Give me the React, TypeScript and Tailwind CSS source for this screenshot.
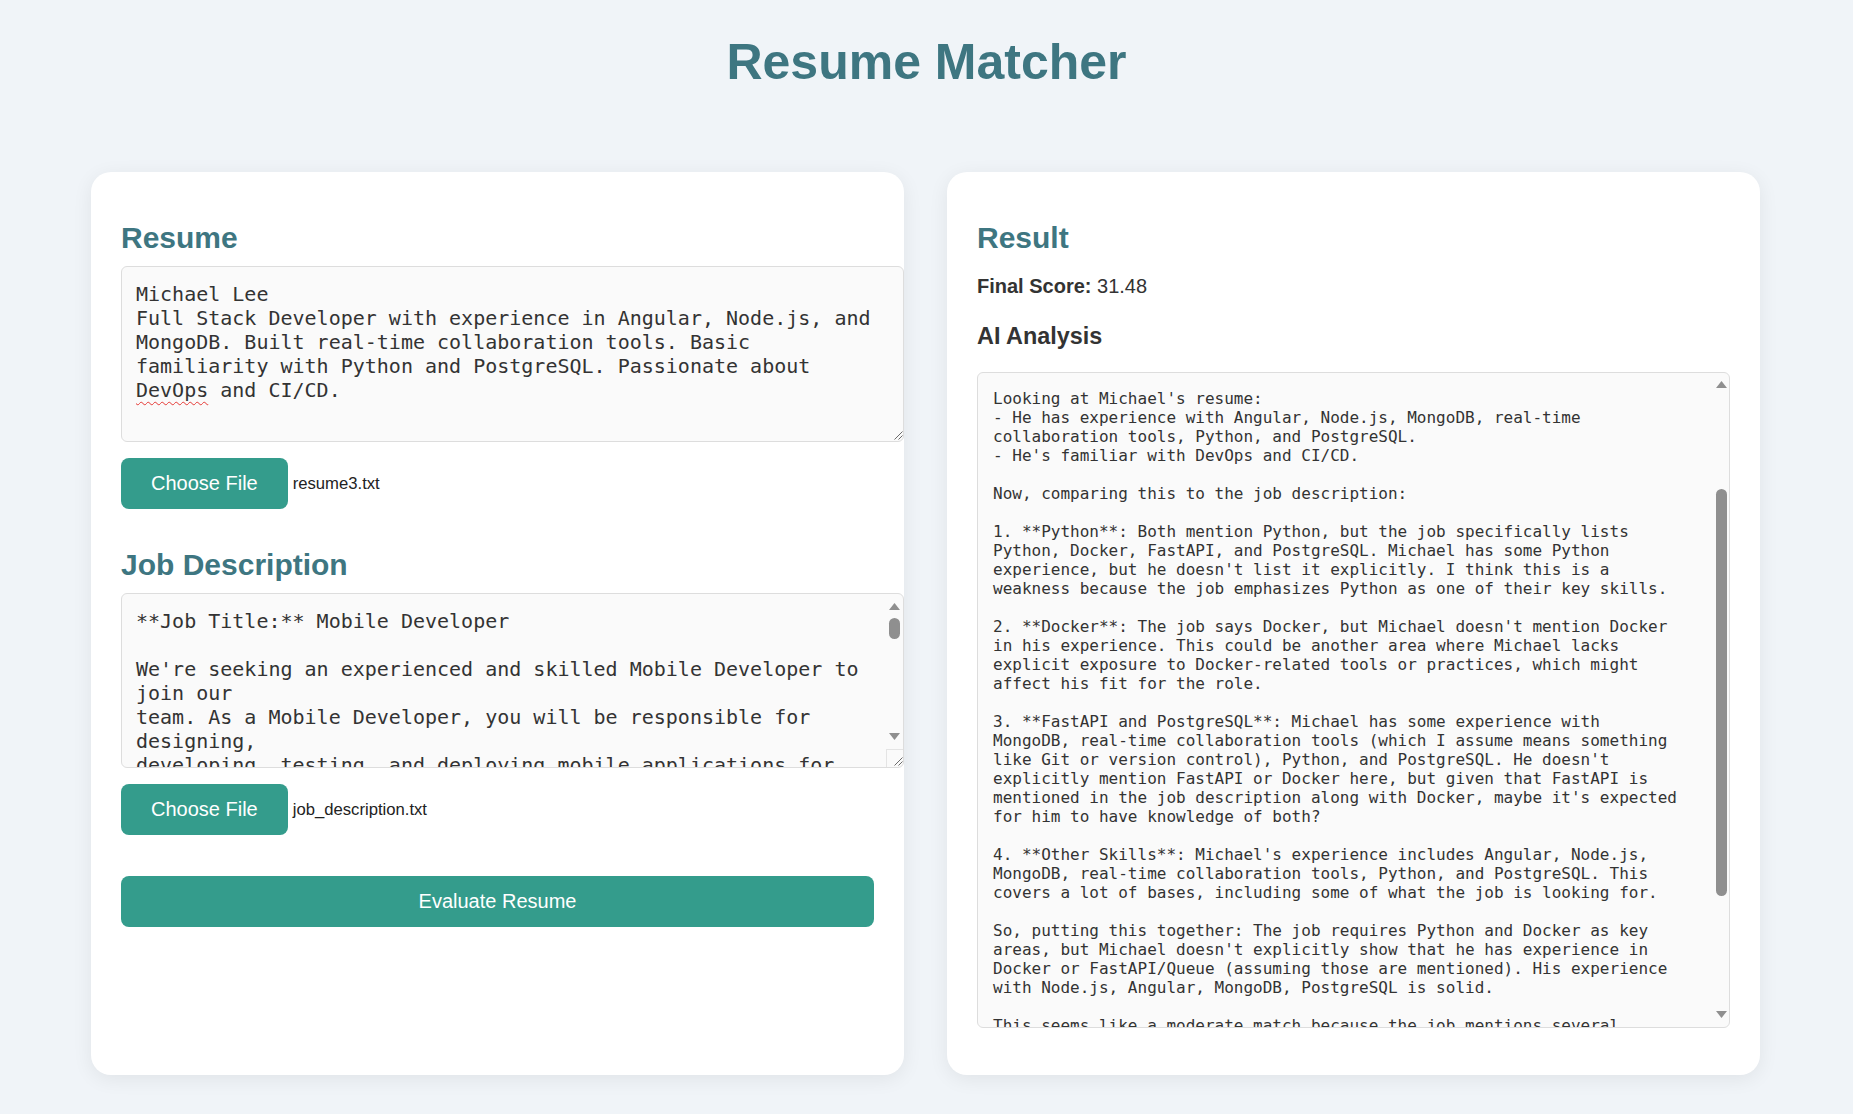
import React from "react";

const sans = "font-['Liberation_Sans',Arial,sans-serif]";
const mono = "font-['DejaVu_Sans_Mono',monospace]";

function UpArrow() {
  return (
    <svg width="11" height="7" viewBox="0 0 11 7" className="block">
      <path d="M0 7 L5.5 0 L11 7 Z" fill="#8f8f8f" />
    </svg>
  );
}

function DownArrow() {
  return (
    <svg width="11" height="7" viewBox="0 0 11 7" className="block">
      <path d="M0 0 L11 0 L5.5 7 Z" fill="#8f8f8f" />
    </svg>
  );
}

function Grip() {
  return (
    <svg width="9" height="9" viewBox="0 0 9 9" className="block">
      <path d="M8.5 0.5 L0.5 8.5 M8.5 4.5 L4.5 8.5" stroke="#6b6b6b" strokeWidth="1" />
    </svg>
  );
}

const resumeLines: React.ReactNode[] = [
  "Michael Lee",
  "Full Stack Developer with experience in Angular, Node.js, and",
  "MongoDB. Built real-time collaboration tools. Basic",
  "familiarity with Python and PostgreSQL. Passionate about",
  <>
    <span className="underline decoration-wavy decoration-[#e53935] decoration-1 underline-offset-[4px]">DevOps</span> and CI/CD.
  </>,
];

const jobLines = [
  "**Job Title:** Mobile Developer",
  "",
  "We're seeking an experienced and skilled Mobile Developer to",
  "join our",
  "team. As a Mobile Developer, you will be responsible for",
  "designing,",
  "developing, testing, and deploying mobile applications for",
  "iOS and Android platforms.",
];

const analysisLines = [
  "Looking at Michael's resume:",
  "- He has experience with Angular, Node.js, MongoDB, real-time",
  "collaboration tools, Python, and PostgreSQL.",
  "- He's familiar with DevOps and CI/CD.",
  "",
  "Now, comparing this to the job description:",
  "",
  "1. **Python**: Both mention Python, but the job specifically lists",
  "Python, Docker, FastAPI, and PostgreSQL. Michael has some Python",
  "experience, but he doesn't list it explicitly. I think this is a",
  "weakness because the job emphasizes Python as one of their key skills.",
  "",
  "2. **Docker**: The job says Docker, but Michael doesn't mention Docker",
  "in his experience. This could be another area where Michael lacks",
  "explicit exposure to Docker-related tools or practices, which might",
  "affect his fit for the role.",
  "",
  "3. **FastAPI and PostgreSQL**: Michael has some experience with",
  "MongoDB, real-time collaboration tools (which I assume means something",
  "like Git or version control), Python, and PostgreSQL. He doesn't",
  "explicitly mention FastAPI or Docker here, but given that FastAPI is",
  "mentioned in the job description along with Docker, maybe it's expected",
  "for him to have knowledge of both?",
  "",
  "4. **Other Skills**: Michael's experience includes Angular, Node.js,",
  "MongoDB, real-time collaboration tools, Python, and PostgreSQL. This",
  "covers a lot of bases, including some of what the job is looking for.",
  "",
  "So, putting this together: The job requires Python and Docker as key",
  "areas, but Michael doesn't explicitly show that he has experience in",
  "Docker or FastAPI/Queue (assuming those are mentioned). His experience",
  "with Node.js, Angular, MongoDB, PostgreSQL is solid.",
  "",
  "This seems like a moderate match because the job mentions several",
  "technologies that Michael has not explicitly listed.",
];

function FileRow({ name, className }: { name: string; className?: string }) {
  return (
    <div className={`flex items-center ${className ?? ""}`}>
      <button
        type="button"
        className={`${sans} h-[51px] rounded-[8px] bg-[#349c8c] px-[30px] text-[20px] leading-[23px] text-white`}
      >
        Choose File
      </button>
      <span className={`${sans} ml-[5px] text-[16.67px] text-[#222]`}>{name}</span>
    </div>
  );
}

export default function App() {
  return (
    <div className={`${sans} min-h-screen bg-[#f0f4f8] pb-[39px]`}>
      <h1 className="pt-[33px] text-center text-[50px] font-bold leading-[58px] text-[#3e7681]">
        Resume Matcher
      </h1>

      <div className="mt-[81px] flex gap-[43px] pl-[91px]">
        {/* Left card */}
        <div className="w-[813px] rounded-[20px] bg-white p-[30px] shadow-[0_4px_20px_rgba(0,0,0,0.07)]">
          <h2 className="mt-[19px] text-[30px] font-bold leading-[34px] text-[#3e7681]">Resume</h2>
          <div className="mt-[11px] flex h-[176px] w-[calc(100%+30px)] flex-col overflow-hidden rounded-[6px] border border-[#dddddd] bg-[#fafafa]">
            <div className={`${mono} whitespace-pre px-[14px] pt-[15px] text-[20px] leading-[24px] text-[#333]`}>
              {resumeLines.map((l, i) => (
                <div key={i}>{l === "" ? "\u00a0" : l}</div>
              ))}
            </div>
            <div className="flex-1" />
            <div className="flex justify-end pb-[1px]">
              <Grip />
            </div>
          </div>
          <FileRow name="resume3.txt" className="mt-[16px]" />

          <h2 className="mt-[39px] text-[30px] font-bold leading-[34px] text-[#3e7681]">Job Description</h2>
          <div className="mt-[11px] flex h-[175px] w-[calc(100%+30px)] overflow-hidden rounded-[6px] border border-[#dddddd] bg-[#fafafa]">
            <div className={`${mono} min-w-0 flex-1 overflow-hidden whitespace-pre px-[14px] pt-[15px] text-[20px] leading-[24px] text-[#333]`}>
              {jobLines.map((l, i) => (
                <div key={i}>{l === "" ? "\u00a0" : l}</div>
              ))}
            </div>
            <div className="flex w-[17px] flex-col items-center">
              <div className="pt-[9px]">
                <UpArrow />
              </div>
              <div className="mt-[8px] h-[21px] w-[11px] rounded-full bg-[#8f8f8f]" />
              <div className="flex-1" />
              <DownArrow />
              <div className="mt-[9px] flex h-[18px] w-[17px] items-end justify-end border-l border-t border-[#e4e4e4] pb-[1px]">
                <Grip />
              </div>
            </div>
          </div>
          <FileRow name="job_description.txt" className="mt-[16px]" />

          <button
            type="button"
            className="mt-[41px] h-[51px] w-full rounded-[8px] bg-[#349c8c] text-[20px] leading-[23px] text-white"
          >
            Evaluate Resume
          </button>
        </div>

        {/* Right card */}
        <div className="w-[813px] rounded-[20px] bg-white p-[30px] shadow-[0_4px_20px_rgba(0,0,0,0.07)]">
          <h2 className="mt-[19px] text-[30px] font-bold leading-[34px] text-[#3e7681]">Result</h2>
          <p className="mt-[20px] text-[20px] leading-[23px] text-[#333]">
            <span className="font-bold">Final Score:</span> 31.48
          </p>
          <h3 className="mt-[25px] text-[23.4px] font-bold leading-[27px] text-[#333]">AI Analysis</h3>
          <div className="mt-[22px] mb-[17px] flex h-[656px] overflow-hidden rounded-[6px] border border-[#dddddd] bg-[#fafafa]">
            <div className={`${mono} min-w-0 flex-1 overflow-hidden whitespace-pre pl-[15px] pt-[16px] text-[16px] leading-[19px] text-[#333]`}>
              {analysisLines.map((l, i) => (
                <div key={i}>{l === "" ? "\u00a0" : l}</div>
              ))}
            </div>
            <div className="flex w-[15px] flex-col items-center">
              <div className="pt-[8px]">
                <UpArrow />
              </div>
              <div className="mt-[101px] h-[407px] w-[11px] rounded-full bg-[#8f8f8f]" />
              <div className="flex-1" />
              <div className="pb-[9px]">
                <DownArrow />
              </div>
            </div>
          </div>
        </div>
      </div>
    </div>
  );
}
